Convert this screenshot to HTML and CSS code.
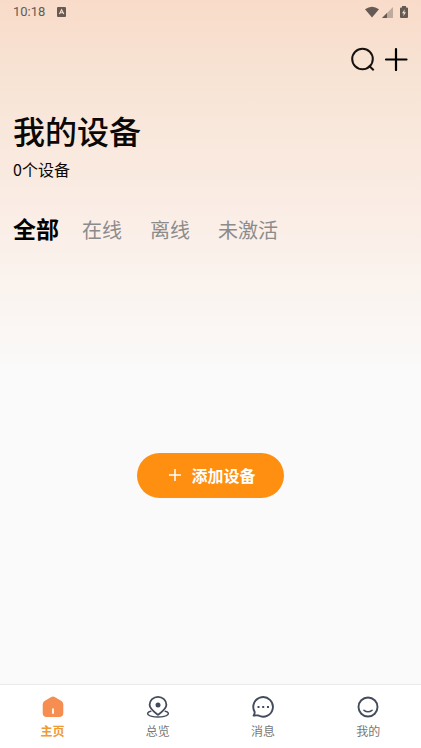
FILE: index.html
```html
<!DOCTYPE html>
<html lang="zh-CN">
<head>
<meta charset="utf-8">
<meta name="viewport" content="width=device-width, initial-scale=1">
<title>我的设备</title>
<link rel="stylesheet" href="styles.css">
</head>
<body>
<div class="app">
  <div class="status">
    <div class="status-group">
      <span class="time">10:18</span>
      <svg width="10" height="10" viewBox="0 0 10 10" aria-hidden="true">
        <rect width="9" height="10" rx="1" fill="#665b54"/>
        <path d="M2.4 7 4.6 2.8 6.8 7M3.4 5.7h2.4" fill="none" stroke="#f9dfce" stroke-width="1.1"/>
      </svg>
    </div>
    <div class="status-icons">
      <svg width="14" height="12" viewBox="0 0 15 12" aria-hidden="true">
        <path d="M0 3Q7.500-2.500 15 3L7.500 12Z" fill="#665b54"/>
      </svg>
      <svg width="11" height="12" viewBox="0 0 11 12" aria-hidden="true">
        <path d="M0 12 11 1V12Z" fill="#bfaa9d"/>
        <path d="M0 12 5 7V12Z" fill="#665b54"/>
      </svg>
      <svg class="battery" width="8" height="12" viewBox="0 0 8 13" preserveAspectRatio="none" aria-hidden="true">
        <path d="M2 0H6V1.500H7Q8 1.500 8 2.500V12Q8 13 7 13H1Q0 13 0 12V2.500Q0 1.500 1 1.500H2Z" fill="#665b54"/>
        <path d="M4.700 3.500 2 7.800H3.700L3.300 11 6 6.700H4.300Z" fill="#f9dfce"/>
      </svg>
    </div>
  </div>

  <header class="toolbar">
    <button class="icon-button" type="button" aria-label="搜索">
      <svg width="24" height="24" viewBox="0 0 24 24" fill="none" stroke="#17120f" stroke-width="2">
        <circle cx="11.500" cy="12" r="10.300"/>
        <path d="M17.800 18.500 22.700 23.200"/>
      </svg>
    </button>
    <button class="icon-button" type="button" aria-label="添加">
      <svg width="24" height="24" viewBox="0 0 24 24" fill="none" stroke="#000" stroke-width="2.200" stroke-linecap="round">
        <path d="M12 2V23M2 12.500H22.500"/>
      </svg>
    </button>
  </header>

  <main class="content">
    <h1 class="title">我的设备</h1>
    <p class="count">0个设备</p>
    <div class="tabs" role="tablist">
      <button class="tab tab-active" type="button" role="tab" aria-selected="true">全部</button>
      <button class="tab" type="button" role="tab" aria-selected="false">在线</button>
      <button class="tab" type="button" role="tab" aria-selected="false">离线</button>
      <button class="tab" type="button" role="tab" aria-selected="false">未激活</button>
    </div>
    <section class="empty">
      <button class="add" type="button">
        <svg width="12" height="12" viewBox="0 0 12 12" fill="none" stroke="#fff" stroke-width="1.500" aria-hidden="true">
          <path d="M6 0V12M0 6H12"/>
        </svg>
        添加设备
      </button>
    </section>
  </main>

  <nav class="nav">
    <a class="nav-item nav-active" href="#home" aria-current="page">
      <svg width="24" height="24" viewBox="0 0 24 24" aria-hidden="true">
        <path d="M9.800 2.200Q12 .8 14.200 2.200L20.500 6Q22.300 7.200 22.300 9.500V18Q22.300 22 18.300 22H5.700Q1.700 22 1.700 18V9.500Q1.700 7.200 3.500 6Z" fill="#f68e52"/>
        <path d="M12 14.200V18" stroke="#fff" stroke-width="1.800" stroke-linecap="round"/>
      </svg>
      主页
    </a>
    <a class="nav-item" href="#overview">
      <svg width="24" height="24" viewBox="0 0 24 24" fill="none" stroke="#434c5c" stroke-width="1.800" stroke-linecap="round" stroke-linejoin="round" aria-hidden="true">
        <path d="M12 19.800C8 16.800 3.600 14 3.600 9.800A8.400 8 0 0 1 20.400 9.800C20.400 14 16 16.800 12 19.800Z"/>
        <circle cx="12" cy="10" r="2.500" fill="#434c5c" stroke="none"/>
        <path d="M4.800 16.300C1.500 17 1 18.600 2.300 19.800C4 21.400 8 22 12 22C16 22 20 21.400 21.700 19.800C23 18.600 22.500 17 19.200 16.300" stroke-width="1.500"/>
      </svg>
      总览
    </a>
    <a class="nav-item" href="#messages">
      <svg width="24" height="24" viewBox="0 0 24 24" fill="none" stroke="#434c5c" stroke-width="1.900" stroke-linejoin="round" aria-hidden="true">
        <path d="M3.600 16.700A9.800 9.800 0 1 1 7.500 20.500Q5.500 20.300 2.600 20.600Q3.900 19 3.600 16.700Z"/>
        <path d="M6.500 11h2v2h-2zM11.200 11h2v2h-2zM16 11h2v2h-2z" fill="#434c5c" stroke="none"/>
      </svg>
      消息
    </a>
    <a class="nav-item" href="#profile">
      <svg width="24" height="24" viewBox="0 0 24 24" fill="none" stroke="#434c5c" stroke-width="1.900" stroke-linecap="round" aria-hidden="true">
        <circle cx="12" cy="12" r="9.500"/>
        <path d="M8 15.300Q12 18.300 16 15.300" stroke-width="1.600"/>
      </svg>
      我的
    </a>
  </nav>
</div>
</body>
</html>
```
FILE: styles.css
```css
* {
  box-sizing: border-box;
}

body {
  margin: 0;
  font-family: "Noto Sans CJK SC", sans-serif;
  color: #0b0806;
}

button {
  padding: 0;
  border: 0;
  background: none;
  font: inherit;
  color: inherit;
}

svg {
  display: block;
  flex: none;
}

.app {
  display: flex;
  flex-direction: column;
  min-height: 100vh;
  background: #fafafa linear-gradient(#f9dbc9 0, #f7e4d5 80px, #faece4 200px, #faf3ee 280px, #fafafa 372px) no-repeat;
}

.status {
  display: flex;
  align-items: center;
  justify-content: space-between;
  height: 23px;
  padding: 0 13px;
}

.status-group {
  display: flex;
  align-items: center;
  gap: 12px;
}

.time {
  font-family: Roboto, sans-serif;
  font-size: 13px;
  line-height: 24px;
  color: #665b54;
}

.status-icons {
  display: flex;
  align-items: center;
  gap: 3px;
}

.battery {
  margin-left: 4px;
}

.toolbar {
  display: flex;
  justify-content: flex-end;
  gap: 9px;
  padding: 24px 13px 23px;
}

.content {
  display: flex;
  flex: 1;
  flex-direction: column;
  padding: 16px 13px 0;
}

.title {
  margin: 0;
  font-size: 32px;
  font-weight: 500;
  line-height: 40px;
}

.count {
  margin: 7px 0 0;
  font-size: 16px;
  line-height: 24px;
}

.tabs {
  display: flex;
  align-items: baseline;
  gap: 28px;
  margin-top: 31px;
}

.tab {
  font-size: 20px;
  line-height: 32px;
  color: #8b8b8c;
}

.tab-active {
  margin-right: -5px;
  font-size: 23px;
  font-weight: 700;
  color: #000;
}

.empty {
  display: flex;
  flex: 1;
  align-items: center;
  justify-content: center;
  padding-top: 20px;
}

.add {
  display: flex;
  align-items: center;
  gap: 10px;
  height: 45px;
  padding: 0 28px 0 32px;
  border-radius: 24px;
  background: #ff8f10;
  font-size: 16px;
  font-weight: 700;
  line-height: 24px;
  color: #fff;
}

.nav {
  display: grid;
  grid-template-columns: repeat(4, 1fr);
  border-top: 1px solid #ebebeb;
  background: #fff;
}

.nav-item {
  display: flex;
  flex-direction: column;
  align-items: center;
  gap: 2px;
  padding: 10px 0 8px;
  font-size: 12px;
  line-height: 19px;
  color: #777;
  text-decoration: none;
}

.nav-active {
  font-weight: 700;
  color: #ee9a35;
}
```
